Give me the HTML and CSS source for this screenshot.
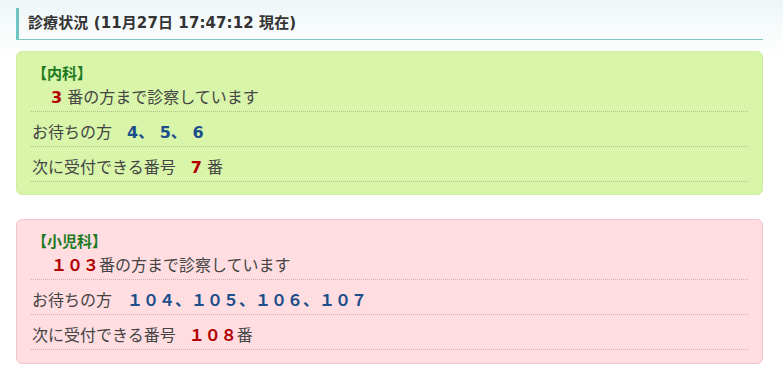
FILE: index.html
```html
<!DOCTYPE html>
<html lang="ja">
<head>
<meta charset="utf-8">
<link rel="stylesheet" href="styles.css">
</head>
<body>
<div class="page">
  <h2 class="title">診療状況 (11月27日 17:47:12 現在)</h2>

  <section class="box green">
    <div class="dept">【内科】</div>
    <div class="row first"><span class="red num">3</span> 番の方まで診察しています</div>
    <div class="row">お待ちの方<span class="blue num gap">4、 5、 6</span></div>
    <div class="row">次に受付できる番号<span class="red num gap">7</span> 番</div>
  </section>

  <section class="box pink">
    <div class="dept">【小児科】</div>
    <div class="row first"><span class="red num">１０３</span>番の方まで診察しています</div>
    <div class="row">お待ちの方<span class="blue num gap">１０４、１０５、１０６、１０７</span></div>
    <div class="row">次に受付できる番号<span class="red num gap-s">１０８</span>番</div>
  </section>
</div>
</body>
</html>
```

FILE: styles.css
```css
html, body {
  margin: 0;
  padding: 0;
}
body {
  background: linear-gradient(to bottom, #eef6f7 0px, #ffffff 55px);
  background-repeat: no-repeat;
  background-color: #fff;
  font-family: "DejaVu Sans", "Noto Sans CJK JP", sans-serif;
  color: #444;
  min-height: 389px;
}
.page {
  padding: 8px 20px 0 16px;
}
.title {
  margin: 0;
  height: 32px;
  box-sizing: border-box;
  border-left: 3px solid #6ec5c1;
  border-bottom: 1px solid #7ccac6;
  padding-left: 9px;
  font-size: 15px;
  font-weight: bold;
  line-height: 30px;
  letter-spacing: 0.1px;
  color: #333;
}
.box {
  margin-top: 11px;
  border: 1px solid;
  border-radius: 6px;
  padding: 10px 14px 12px;
}
.box + .box {
  margin-top: 24px;
}
.green {
  background: #d8f5aa;
  border-color: #cfeca2;
}
.pink {
  background: #ffdde0;
  border-color: #f3c6ca;
  padding-bottom: 13px;
}
.dept {
  color: #217a1f;
  font-weight: bold;
  font-size: 15px;
  line-height: 24px;
  padding-left: 1px;
}
.row {
  font-size: 16px;
  line-height: 24px;
  padding: 9px 0 1px 1px;
  border-bottom: 1px dotted rgba(0, 0, 0, 0.2);
}
.row.first {
  padding-top: 0;
  text-indent: 19px;
}
.num {
  font-weight: bold;
}
.red {
  color: #b30000;
}
.blue {
  color: #1d4e8c;
}
.gap {
  margin-left: 15px;
}
.gap-s {
  margin-left: 13px;
}
```
